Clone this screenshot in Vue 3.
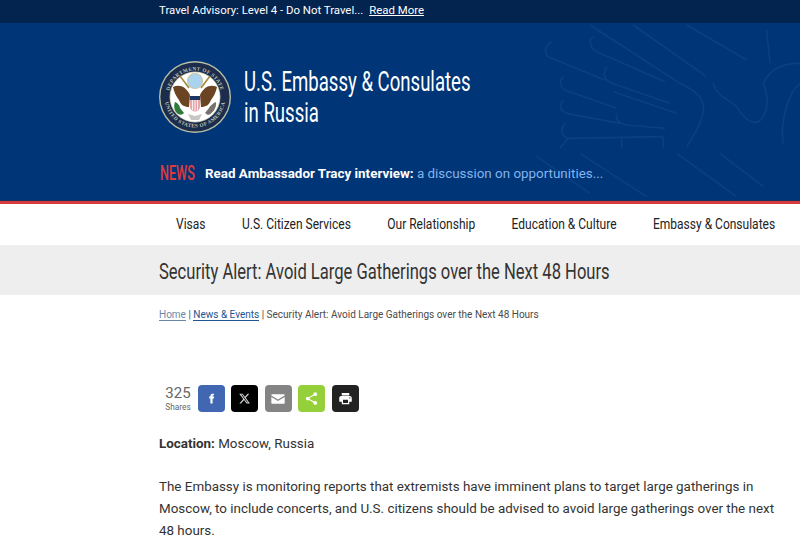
<template>
  <div class="page">
    <div class="advisory">
      <div class="wrap advisory-row">
        <span>Travel Advisory: Level 4 - Do Not Travel...</span>
        <a class="advisory-link">Read More</a>
      </div>
    </div>

    <header class="masthead">
      <svg class="wing" viewBox="0 0 960 570" fill="none" stroke="#0a4084" stroke-width="5">
        <path d="M340 50C325 60 330 85 350 95L555 185" />
        <path d="M215 65C190 80 190 105 215 115L375 180" />
        <path d="M380 140C365 165 375 180 395 190L570 250" />
        <path d="M250 170C235 185 240 205 260 212L410 265" />
        <path d="M400 215L590 280" />
        <path d="M250 240C235 260 240 270 260 280L420 310" />
        <path d="M410 280C405 300 420 310 440 315L555 325" />
        <path d="M255 310C240 330 245 350 265 355L550 350" />
        <path d="M240 385L265 355M425 385V355M550 385V350" />
        <path d="M330 15L600 190C680 230 700 260 620 380" />
        <path d="M460 15L680 170" />
        <path d="M700 190C710 230 750 240 770 260C800 310 830 320 850 290C870 250 860 220 850 190C870 150 900 130 960 130" />
        <path d="M910 370C900 320 920 220 960 190" />
        <path d="M590 400L770 530M720 400L850 500M170 410L330 520M300 400L500 530" />
        <path d="M620 15L800 120M860 30L870 130" />
      </svg>
      <div class="wrap">
        <div class="brand">
          <svg class="seal" viewBox="0 0 72 72">
            <defs>
              <path id="ring-top" d="M9.500 36a26.500 26.500 0 0 1 53 0" />
              <path id="ring-bottom" d="M5.500 36a30.500 30.500 0 0 0 61 0" />
            </defs>
            <circle cx="36" cy="36" r="36" fill="#b9bfa6" />
            <circle cx="36" cy="36" r="34.600" fill="#1b2c4c" />
            <circle cx="36" cy="36" r="25.500" fill="#b9bfa6" />
            <circle cx="36" cy="36" r="24.700" fill="#fff" />
            <text class="seal-text"><textPath href="#ring-top" startOffset="50%" text-anchor="middle">DEPARTMENT OF STATE</textPath></text>
            <text class="seal-text"><textPath href="#ring-bottom" startOffset="50%" text-anchor="middle">UNITED STATES OF AMERICA</textPath></text>
            <circle cx="36" cy="20" r="7.500" fill="#a9d3ee" stroke="#c9c6a8" stroke-width="1.200" />
            <path d="M14 26c7-3 13 0 17 8l-1 12c-5 0-8-2-10-7-3-4-5-8-6-13zM58 26c-7-3-13 0-17 8l1 12c5 0 8-2 10-7 3-4 5-8 6-13z" fill="#6b4423" />
            <path d="M21 15l9 12M51 15l-9 12" stroke="#a5893f" stroke-width="1.600" />
            <path d="M31 35h10v11c0 2-2 4-5 5-3-1-5-3-5-5z" fill="#e8a5ac" />
            <path d="M31 35h10v4H31z" fill="#1d3563" />
            <path d="M33.500 39v10M36 39v12M38.500 39v10" stroke="#fff" stroke-width=".800" />
            <path d="M16 41c3 1 5 4 5 6l4 5c-2 2-4 2-6 1-3-2-5-7-3-12z" fill="#2f7a3c" />
            <path d="M57 41c-3 1-6 4-7 6l-4 5 3 2c4-1 9-7 8-13z" fill="#77736c" />
            <path d="M29 53l7 2 7-2-3 6h-8z" fill="#c9c7c3" />
          </svg>
          <div class="brand-box">
            <h1 class="brand-title">U.S. Embassy &amp; Consulates<br />in Russia</h1>
          </div>
        </div>
        <div class="news">
          <span class="news-tag"><span>NEWS</span></span>
          <span class="news-text"><b>Read Ambassador Tracy interview:</b> <span class="news-more">a discussion on opportunities...</span></span>
        </div>
      </div>
    </header>

    <nav class="nav-bar">
      <div class="nav">
        <a v-for="item in navItems" :key="item">{{ item }}</a>
      </div>
    </nav>

    <div class="title-band">
      <h2 class="page-title">Security Alert: Avoid Large Gatherings over the Next 48 Hours</h2>
    </div>

    <main class="wrap content">
      <div class="crumbs">
        <a class="crumb-home">Home</a> | <a class="crumb-news">News &amp; Events</a> | Security Alert: Avoid Large Gatherings over the Next 48 Hours
      </div>

      <div class="share">
        <div class="share-count">
          <span class="share-num">325</span>
          <span class="share-label">Shares</span>
        </div>
        <a class="share-btn fb">
          <svg viewBox="0 0 24 24" width="13" height="13"><path fill="#fff" d="M14 8.500V7c0-.7.4-1 1-1h1.600V3h-2.500C11.400 3 10 4.800 10 7v1.500H7.800V12H10v9h4v-9h2.400l.4-3.500z" /></svg>
        </a>
        <a class="share-btn tw">
          <svg viewBox="0 0 24 24" width="13" height="13"><path fill="#d8d8d8" d="M17.800 3h3l-6.600 7.600L22 21h-6.100l-4.800-6.300L5.600 21h-3l7-8.100L2.200 3h6.300l4.300 5.800zm-1.100 16.200h1.700L7.600 4.700H5.800z" /></svg>
        </a>
        <a class="share-btn mail">
          <svg viewBox="0 0 24 24" width="16" height="16"><path fill="#fff" d="M3 5h18c.6 0 1 .4 1 1v.6l-10 6-10-6V6c0-.6.400-1 1-1zm-1 3.900V18c0 .6.400 1 1 1h18c.6 0 1-.4 1-1V8.900l-10 6z" /></svg>
        </a>
        <a class="share-btn sh">
          <svg viewBox="0 0 24 24" width="15" height="15"><path fill="#fff" d="M18 16c-.8 0-1.500.3-2 .8l-7.100-4.100c.1-.2.100-.5.100-.7s0-.5-.1-.7L16 7.200c.5.500 1.200.8 2 .8 1.700 0 3-1.300 3-3s-1.300-3-3-3-3 1.300-3 3c0 .2 0 .5.100.7L8 9.800C7.500 9.300 6.800 9 6 9c-1.700 0-3 1.300-3 3s1.300 3 3 3c.8 0 1.500-.3 2-.8l7.100 4.100c-.1.200-.1.400-.1.700 0 1.600 1.300 3 3 3s3-1.400 3-3-1.300-3-3-3z" /></svg>
        </a>
        <a class="share-btn pr">
          <svg viewBox="0 0 24 24" width="15" height="15"><path fill="#fff" d="M19 8H5c-1.700 0-3 1.300-3 3v6h4v4h12v-4h4v-6c0-1.700-1.300-3-3-3zm-3 11H8v-5h8zm3-7c-.6 0-1-.4-1-1s.4-1 1-1 1 .4 1 1-.4 1-1 1zM18 3H6v4h12z" /></svg>
        </a>
      </div>

      <p class="location"><b>Location:</b> Moscow, Russia</p>
      <p class="body-text">The Embassy is monitoring reports that extremists have imminent plans to target large gatherings in Moscow, to include concerts, and U.S. citizens should be advised to avoid large gatherings over the next 48 hours.</p>
    </main>
  </div>
</template>

<script setup>
const navItems = ['Visas', 'U.S. Citizen Services', 'Our Relationship', 'Education & Culture', 'Embassy & Consulates']
</script>

<style>
html, body {
  margin: 0;
  overflow: hidden;
}
</style>

<style scoped>
.page {
  width: 800px;
  height: 558px;
  overflow: hidden;
  background: #fff;
  font-family: Roboto, "Liberation Sans", sans-serif;
  color: #333;
}

.wrap {
  padding-left: 159px;
}

.advisory {
  height: 23px;
  background: #03244f;
  color: #fff;
  font-size: 11.4px;
}

.advisory-row {
  display: flex;
  gap: 6px;
  line-height: 21px;
}

.advisory-link {
  text-decoration: underline;
}

.masthead {
  position: relative;
  height: 177px;
  background: #003577;
  border-bottom: 1px solid #1d2f5c;
  overflow: hidden;
}

.wing {
  position: absolute;
  top: -3px;
  left: 480px;
  width: 320px;
  height: 190px;
}

.brand {
  position: relative;
  display: flex;
  align-items: center;
  gap: 13px;
  padding-top: 38px;
}

.seal {
  width: 72px;
  height: 72px;
  flex: none;
}

.seal-text {
  font-family: "Liberation Serif", serif;
  font-size: 5.2px;
  font-weight: 700;
  fill: #c5c9b4;
  letter-spacing: .4px;
}

.brand-box {
  width: 228px;
  white-space: nowrap;
  padding-top: 2px;
}

.brand-title {
  margin: 0;
  font-weight: 400;
  font-size: 27px;
  line-height: 31px;
  color: #fff;
  transform: scaleX(.688);
  transform-origin: left center;
}

.news {
  position: relative;
  display: flex;
  align-items: center;
  gap: 9px;
  margin-top: 29px;
  padding-left: 1px;
  color: #fff;
  font-size: 13.4px;
}

.news-tag {
  width: 36px;
  white-space: nowrap;
  font-size: 20px;
  font-weight: 500;
  line-height: 22px;
  color: #e03a3e;
}

.news-tag span {
  display: inline-block;
  transform: scaleX(.63);
  transform-origin: left center;
}

.news-more {
  color: #82b4ee;
}

.nav-bar {
  height: 41px;
  border-top: 3px solid #d43a3e;
  box-sizing: content-box;
  overflow: hidden;
}

.nav {
  height: 41px;
  display: flex;
  align-items: center;
  gap: 44px;
  padding-left: 176px;
  font-size: 14.5px;
  color: #222;
  white-space: nowrap;
  transform: scaleX(.828);
  transform-origin: 176px center;
}

.title-band {
  height: 48px;
  padding-top: 2px;
  background: #eeeeee;
  display: flex;
  align-items: center;
  padding-left: 159px;
}

.page-title {
  margin: 0;
  font-weight: 400;
  font-size: 22px;
  color: #333;
  white-space: nowrap;
  transform: scaleX(.753);
  transform-origin: left center;
}

.content {
  padding-right: 24px;
}

.crumbs {
  margin-top: 13px;
  font-size: 10px;
  line-height: 14px;
  color: #4a4a4a;
  white-space: nowrap;
}

.crumb-home {
  color: #6a87a8;
  border-bottom: 1px solid #6a87a8;
}

.crumb-news {
  color: #205493;
  border-bottom: 1px solid #205493;
}

.share {
  display: flex;
  align-items: center;
  gap: 6.5px;
  margin-top: 63px;
  margin-left: 6px;
}

.share-count {
  display: flex;
  flex-direction: column;
  align-items: center;
  gap: 2px;
  width: 26px;
  color: #666;
}

.share-num {
  font-size: 15px;
  line-height: 15px;
}

.share-label {
  font-size: 8.3px;
  line-height: 9px;
}

.share-btn {
  width: 27px;
  height: 27px;
  border-radius: 4px;
  display: flex;
  align-items: center;
  justify-content: center;
}

.fb { background: #4267b2; }
.tw { background: #000; }
.mail { background: #848484; }
.sh { background: #95d03a; }
.pr { background: #222; }

.location {
  margin: 21px 0 0;
  font-size: 13.4px;
  line-height: 21px;
}

.body-text {
  margin: 22px 0 0;
  font-size: 13.4px;
  line-height: 22px;
}
</style>
